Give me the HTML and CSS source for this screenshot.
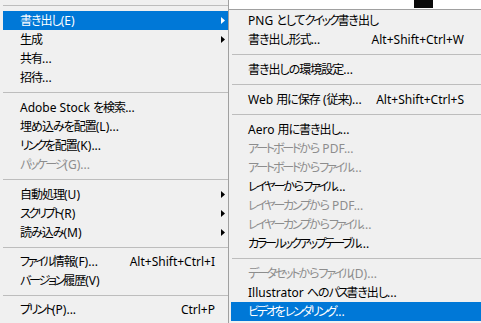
FILE: index.html
```html
<!DOCTYPE html>
<html lang="ja">
  <head>
    <meta charset="UTF-8" />
    <title>ファイルメニュー</title>
    <link rel="stylesheet" href="styles.css">
  </head>
  <body>
    <div class="screen">
      <div class="menu">
        <div class="sep sep-11"></div>
        <div class="item active"><span class="label"><span class="jp">書き出し</span>(E)</span><span class="arrow"><svg width="4" height="7" viewBox="0 0 4 7"><polygon points="0,0 4,3.5 0,7" /></svg></span></div>
        <div class="item"><span class="label"><span class="jp">生成</span></span><span class="arrow"><svg width="4" height="7" viewBox="0 0 4 7"><polygon points="0,0 4,3.5 0,7" /></svg></span></div>
        <div class="item"><span class="label"><span class="jp">共有</span>...</span></div>
        <div class="item"><span class="label"><span class="jp">招待</span>...</span></div>
        <div class="sep sep-11"></div>
        <div class="item"><span class="label">Adobe Stock <span class="jp">を検索</span>...</span></div>
        <div class="item"><span class="label"><span class="jp">埋め込みを配置</span>(L)...</span></div>
        <div class="item"><span class="label"><span class="kt">リンク</span><span class="jp">を配置</span>(K)...</span></div>
        <div class="item disabled"><span class="label"><span class="kt">パッケージ</span>(G)...</span></div>
        <div class="sep sep-11"></div>
        <div class="item"><span class="label"><span class="jp">自動処理</span>(U)</span><span class="arrow"><svg width="4" height="7" viewBox="0 0 4 7"><polygon points="0,0 4,3.5 0,7" /></svg></span></div>
        <div class="item"><span class="label"><span class="kt">スクリプト</span>(R)</span><span class="arrow"><svg width="4" height="7" viewBox="0 0 4 7"><polygon points="0,0 4,3.5 0,7" /></svg></span></div>
        <div class="item"><span class="label"><span class="jp">読み込み</span>(M)</span><span class="arrow"><svg width="4" height="7" viewBox="0 0 4 7"><polygon points="0,0 4,3.5 0,7" /></svg></span></div>
        <div class="sep sep-10"></div>
        <div class="item"><span class="label"><span class="kt">ファイル</span><span class="jp">情報</span>(F)...</span><span class="key">Alt+Shift+Ctrl+I</span><span class="arrow"></span></div>
        <div class="item"><span class="label"><span class="kt">バージョン</span><span class="jp">履歴</span>(V)</span></div>
        <div class="sep sep-10"></div>
        <div class="item"><span class="label"><span class="kt">プリント</span>(P)...</span><span class="key">Ctrl+P</span><span class="arrow"></span></div>
      </div>

      <div class="side">
        <div class="canvas-strip"><div class="swatch"></div></div>
        <div class="submenu">
          <div class="item"><span class="label">PNG <span class="jp">として</span><span class="kt">クイック</span><span class="jp">書き出し</span></span></div>
          <div class="item"><span class="label"><span class="jp">書き出し形式</span>...</span><span class="key">Alt+Shift+Ctrl+W</span></div>
          <div class="sep sep-11"></div>
          <div class="item"><span class="label"><span class="jp">書き出しの環境設定</span>...</span></div>
          <div class="sep sep-11"></div>
          <div class="item"><span class="label">Web <span class="jp">用に保存</span> (<span class="jp">従来</span>)...</span><span class="key">Alt+Shift+Ctrl+S</span></div>
          <div class="sep sep-11"></div>
          <div class="item"><span class="label">Aero <span class="jp">用に書き出し</span>...</span></div>
          <div class="item disabled"><span class="label"><span class="kt">アートボード</span><span class="jp">から</span> PDF...</span></div>
          <div class="item disabled"><span class="label"><span class="kt">アートボード</span><span class="jp">から</span><span class="kt">ファイル</span>...</span></div>
          <div class="item"><span class="label"><span class="kt">レイヤー</span><span class="jp">から</span><span class="kt">ファイル</span>...</span></div>
          <div class="item disabled"><span class="label"><span class="kt">レイヤーカンプ</span><span class="jp">から</span> PDF...</span></div>
          <div class="item disabled"><span class="label"><span class="kt">レイヤーカンプ</span><span class="jp">から</span><span class="kt">ファイル</span>...</span></div>
          <div class="item"><span class="label"><span class="kt">カラールックアップテーブル</span>...</span></div>
          <div class="sep sep-11"></div>
          <div class="item disabled"><span class="label"><span class="kt">データセット</span><span class="jp">から</span><span class="kt">ファイル</span>(D)...</span></div>
          <div class="item"><span class="label">Illustrator <span class="jp">への</span><span class="kt">パス</span><span class="jp">書き出し</span>...</span></div>
          <div class="item active"><span class="label"><span class="kt">ビデオ</span><span class="jp">を</span><span class="kt">レンダリング</span>...</span></div>
        </div>
      </div>
    </div>
  </body>
</html>
```

FILE: styles.css
```css
body {
  margin: 0;
  padding: 0;
  overflow: hidden;
  background: #f0f0f0;
  font-family: "Noto Sans", "Noto Sans CJK JP", sans-serif;
  font-size: 12px;
  font-feature-settings: "palt";
  color: #000;
}

.screen {
  display: flex;
  height: 323px;
}

/* Japanese runs are set tighter, like Meiryo UI */
.jp {
  letter-spacing: -1px;
}
.kt {
  letter-spacing: -2.2px;
}

/* main File menu */
.menu {
  width: 225px;
  flex: none;
  padding-left: 3px;
  border-right: 1px solid #a0a0a0;
  background: #f0f0f0;
}

.item {
  display: flex;
  align-items: center;
  height: 19px;
  line-height: 19px;
  white-space: nowrap;
}

.menu .item {
  padding-left: 17px;
}

.item .label {
  flex: 1;
}

.menu .arrow {
  width: 13px;
  display: flex;
  align-items: center;
  padding-left: 6px;
  box-sizing: border-box;
}

.arrow svg {
  fill: #000;
  display: block;
}

.item.active {
  background: #0078d7;
  color: #fff;
}

.item.active .arrow svg {
  fill: #fff;
}

.item.disabled {
  color: #8d8d8d;
}

.sep {
  display: flex;
  flex-direction: column;
  justify-content: flex-start;
}

.sep::before {
  content: "";
  display: block;
  height: 1px;
  background: #bdbdbd;
}

.sep-11 {
  height: 11px;
}
.sep-11::before {
  margin-top: 5px;
}

.sep-10 {
  height: 10px;
}
.sep-10::before {
  margin-top: 5px;
}

/* canvas peeking out behind the submenu */
.side {
  flex: 1;
  display: flex;
  flex-direction: column;
  min-width: 0;
}

.canvas-strip {
  height: 9px;
  background: #fff;
  flex: none;
}

.swatch {
  width: 19px;
  height: 8px;
  margin-left: 185px;
  background: #0a0a0a;
}

/* Export submenu */
.submenu {
  width: 275px;
  flex: none;
  border-top: 1px solid #a0a0a0;
  padding: 1px 0 0 2px;
  background: #f0f0f0;
  flex-grow: 1;
}

.submenu .item {
  width: 273px;
  box-sizing: border-box;
  padding-left: 17px;
  padding-right: 40px;
}

.submenu .sep {
  margin-left: 1px;
}
```
